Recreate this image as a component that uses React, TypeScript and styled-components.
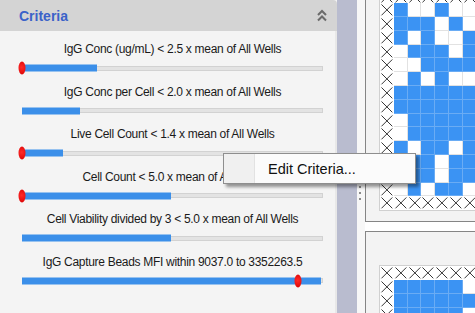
import styled, { createGlobalStyle } from "styled-components";

type iCriterion = {
  label: string;
  fill: number;
  thumb?: number;
};

const criteria: iCriterion[] = [
  { label: "IgG Conc (ug/mL) < 2.5 x mean of All Wells", fill: 25.2, thumb: 0 },
  { label: "IgG Conc per Cell < 2.0 x mean of All Wells", fill: 19.3 },
  { label: "Live Cell Count < 1.4 x mean of All Wells", fill: 13.6, thumb: 0 },
  { label: "Cell Count < 5.0 x mean of All Wells", fill: 49.8, thumb: 0 },
  { label: "Cell Viability divided by 3 < 5.0 x mean of All Wells", fill: 49.8 },
  { label: "IgG Capture Beads MFI within 9037.0 to 3352263.5", fill: 100, thumb: 91.7 }
];

// X = excluded well, B = passing well, W = failing well
const upperPlate = [
  "XXXXXXXX",
  "XBWWBWWB",
  "XBBBWBWB",
  "XBWBWWBW",
  "XWBBBWBB",
  "XWWBBBBW",
  "XWBWBWWB",
  "XBBBBBBB",
  "XBBBBBBB",
  "XWBBBBBB",
  "XWBBBBBB",
  "XBWBBWBB",
  "XBBBWBBW",
  "XWBBWBBB",
  "XWBWBBWB",
  "XXXXXXXX"
];

const lowerPlate = ["XXXXXXXX", "XBBBBBWW", "XBBBBBBB", "XBBBBBWW"];

const GlobalStyle = createGlobalStyle`
  html, body {
    margin: 0;
    padding: 0;
    background: #ffffff;
  }
  body {
    font-family: "Liberation Sans", Arial, sans-serif;
    overflow: hidden;
  }
`;

const Screen = styled.div`
  position: relative;
  display: flex;
  width: 475px;
  height: 313px;
  overflow: hidden;
`;

const CriteriaPanel = styled.section`
  width: 337px;
  flex-shrink: 0;
  display: flex;
  flex-direction: column;
  background: #f4f4f4;
`;

const PanelHeader = styled.div`
  height: 31px;
  flex-shrink: 0;
  display: flex;
  align-items: center;
  justify-content: space-between;
  padding: 0 10px 0 19px;
  background: #d4d4d4;
  border-top-right-radius: 4px;
`;

const PanelTitle = styled.span`
  font: bold 14px "Liberation Sans", Arial, sans-serif;
  color: #3b62c9;
`;

const PanelBody = styled.div`
  flex: 1;
  padding: 11px 12px 0 22px;
  border-right: 2px solid #e8e8e8;
`;

const CriterionRow = styled.div`
  display: flex;
  flex-direction: column;
  gap: 4px;
  margin-bottom: 9.6px;
`;

const CriterionLabel = styled.div`
  text-align: center;
  font-size: 12px;
  letter-spacing: -0.3px;
  line-height: 15px;
  color: #1a1a1a;
  white-space: nowrap;
`;

const SliderTrack = styled.div`
  position: relative;
  height: 14px;
  display: flex;
  align-items: center;
`;

const Rail = styled.div`
  position: relative;
  width: 100%;
  height: 5px;
  box-sizing: border-box;
  background: #e3e3e3;
  border: 1px solid #d2d2d2;
`;

const Fill = styled.div<{ $percent: number }>`
  position: absolute;
  left: -1px;
  top: 50%;
  height: 7px;
  width: ${p => p.$percent}%;
  transform: translateY(-50%);
  background: #3b8fe9;
`;

const Thumb = styled.div<{ $at: number }>`
  position: absolute;
  top: 50%;
  left: ${p => p.$at}%;
  width: 7px;
  height: 13px;
  border-radius: 50%;
  background: radial-gradient(circle at 45% 45%, #ff2a2a, #d80000);
  transform: translate(-50%, -50%);
`;

const Gutter = styled.div`
  width: 20px;
  flex-shrink: 0;
  background: #b9bccf;
`;

const Splitter = styled.div`
  width: 8px;
  flex-shrink: 0;
  box-sizing: border-box;
  display: flex;
  flex-direction: column;
  gap: 4px;
  padding: 186px 0 0 2px;
  background: #f7f7f7;
`;

const SplitterDot = styled.span`
  width: 2px;
  height: 2px;
  background: #8a8a8a;
`;

const Canvas = styled.div`
  flex: 1;
  display: flex;
  flex-direction: column;
  gap: 9px;
  overflow: hidden;
  background: #ffffff;
`;

const PlateBox = styled.div<{ $offset?: number }>`
  flex-shrink: 0;
  width: max-content;
  margin-top: ${p => p.$offset || 0}px;
  padding: 33px 30px 10px 13px;
  background: #f3f3f3;
  border: 1px solid #858585;
  border-right: none;
`;

const PlateGrid = styled.div`
  display: grid;
  grid-template-columns: repeat(8, 13.8px);
  grid-auto-rows: 13.8px;
  border: 1px solid #d0d0d0;
  background: #ffffff;
`;

const Well = styled.div<{ $kind: string }>`
  box-sizing: border-box;
  border-right: 1px solid ${p => (p.$kind === "B" ? "#6aacf4" : "#e2e2e2")};
  border-bottom: 1px solid ${p => (p.$kind === "B" ? "#6aacf4" : "#e2e2e2")};
  background: ${p => (p.$kind === "B" ? "#3b93f3" : "#ffffff")};
`;

const ExcludedWell = styled.svg`
  display: block;
  width: 13.8px;
  height: 13.8px;
`;

const ContextMenu = styled.div`
  position: absolute;
  left: 223px;
  top: 153px;
  width: 193px;
  height: 31px;
  box-sizing: border-box;
  display: flex;
  background: #fbfbfb;
  border: 1px solid #8e8e8e;
  box-shadow: 3px 3px 3px rgba(0, 0, 0, 0.4);
`;

const MenuGutter = styled.div`
  width: 30px;
  background: #f0f0f0;
  border-right: 1px solid #e2e2e2;
`;

const MenuItem = styled.div`
  display: flex;
  align-items: center;
  padding-left: 13px;
  font-size: 14.5px;
  color: #111111;
`;

const CollapseIcon = () => (
  <svg width="10" height="13" viewBox="0 0 10 13">
    <polyline points="1,6 5,2 9,6" fill="none" stroke="#6b6b6b" strokeWidth="2" />
    <polyline points="1,11.5 5,7.5 9,11.5" fill="none" stroke="#6b6b6b" strokeWidth="2" />
  </svg>
);

const Plate = ({ rows, offset }: { rows: string[]; offset?: number }) => {
  return (
    <PlateBox $offset={offset}>
      <PlateGrid>
        {rows.map((row, rowIndex) =>
          row.split("").map((kind, colIndex) => {
            const key = `${rowIndex}-${colIndex}`;
            if (kind === "X") {
              return (
                <ExcludedWell key={key} viewBox="0 0 14 14">
                  <path d="M1.5 1.5 L12.5 12.5 M12.5 1.5 L1.5 12.5" stroke="#333333" strokeWidth="1" />
                </ExcludedWell>
              );
            }
            return <Well key={key} $kind={kind} />;
          })
        )}
      </PlateGrid>
    </PlateBox>
  );
};

const App = () => {
  return (
    <>
      <GlobalStyle />
      <Screen>
        <CriteriaPanel>
          <PanelHeader>
            <PanelTitle>Criteria</PanelTitle>
            <CollapseIcon />
          </PanelHeader>
          <PanelBody>
            {criteria.map(criterion => (
              <CriterionRow key={criterion.label}>
                <CriterionLabel>{criterion.label}</CriterionLabel>
                <SliderTrack>
                  <Rail>
                    <Fill $percent={criterion.fill} />
                  </Rail>
                  {criterion.thumb === undefined ? null : <Thumb $at={criterion.thumb} />}
                </SliderTrack>
              </CriterionRow>
            ))}
          </PanelBody>
        </CriteriaPanel>
        <Gutter />
        <Splitter>
          <SplitterDot />
          <SplitterDot />
          <SplitterDot />
        </Splitter>
        <Canvas>
          <Plate rows={upperPlate} offset={-45.5} />
          <Plate rows={lowerPlate} />
        </Canvas>
        <ContextMenu>
          <MenuGutter />
          <MenuItem>Edit Criteria...</MenuItem>
        </ContextMenu>
      </Screen>
    </>
  );
};

export default App;
